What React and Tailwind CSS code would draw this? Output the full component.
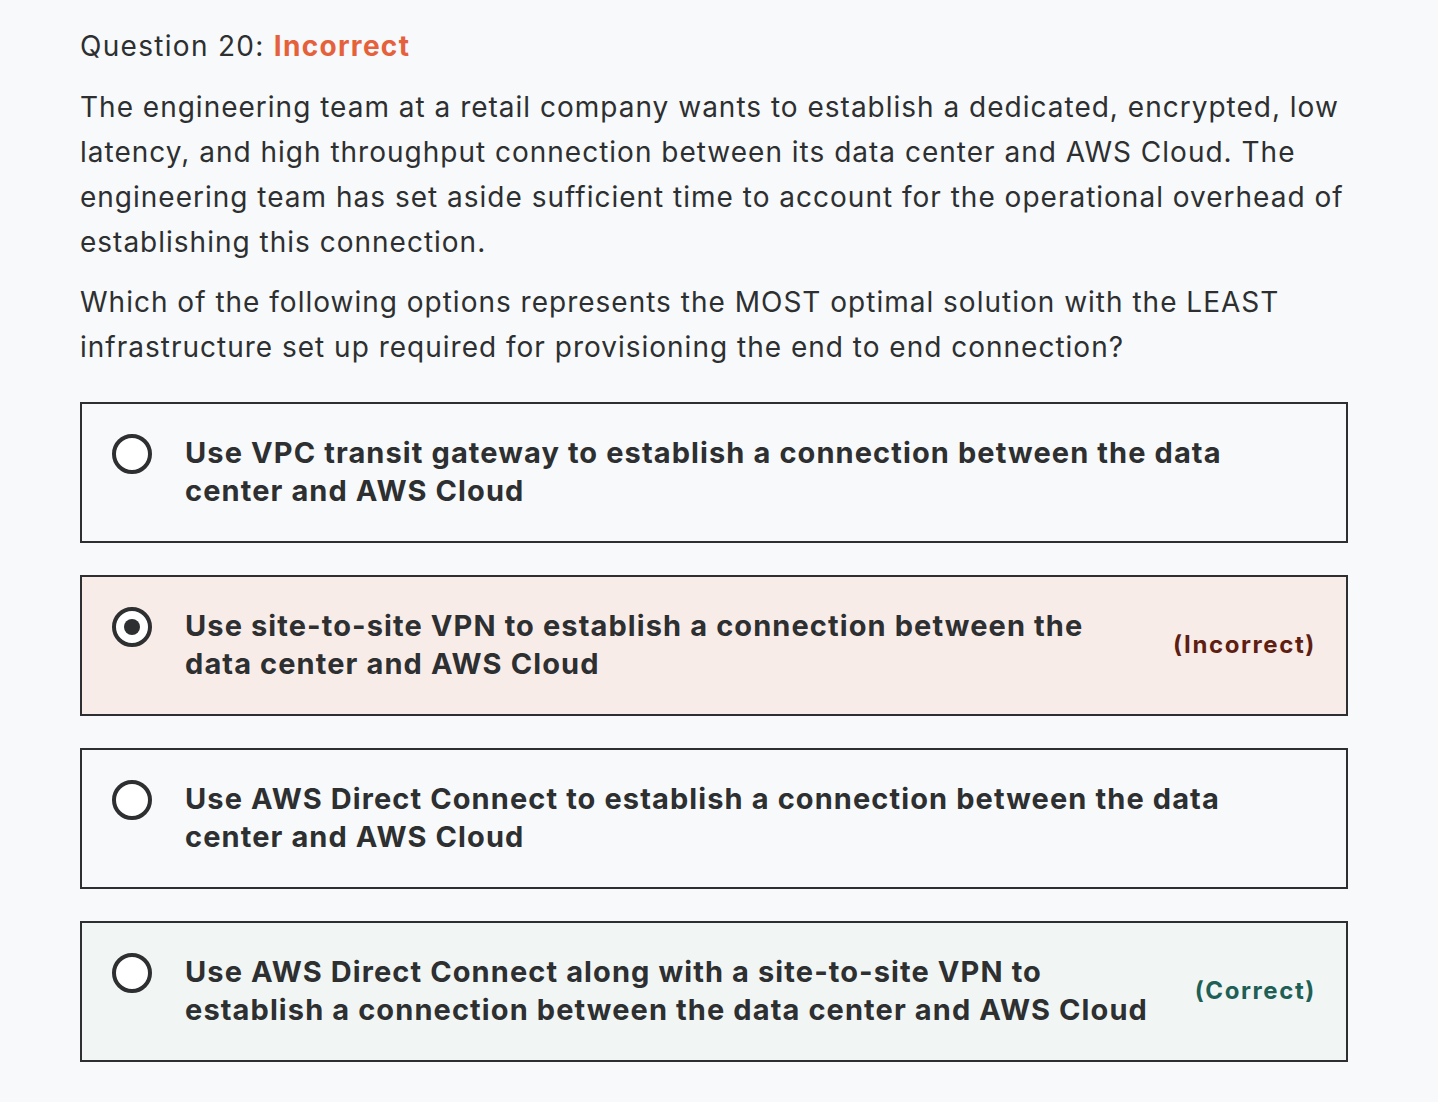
import React from 'react';

const options = [
    { text: 'Use VPC transit gateway to establish a connection between the data center and AWS Cloud' },
    { text: 'Use site-to-site VPN to establish a connection between the data center and AWS Cloud', selected: true, status: 'incorrect' },
    { text: 'Use AWS Direct Connect to establish a connection between the data center and AWS Cloud' },
    { text: 'Use AWS Direct Connect along with a site-to-site VPN to establish a connection between the data center and AWS Cloud', status: 'correct' },
];

const Radio = ({ selected }) => (
    <div className="w-[40px] h-[40px] shrink-0 rounded-full border-[4px] border-[#2d2f31] bg-white flex items-center justify-center">
        {selected && <div className="w-[16px] h-[16px] rounded-full bg-[#2d2f31]" />}
    </div>
);

const Option = ({ text, selected, status }) => {
    const bg = status === 'incorrect' ? 'bg-[#f8ece9]' : status === 'correct' ? 'bg-[#f1f6f4]' : 'bg-transparent';
    return (
        <div className={`border-2 border-[#2d2f31] ${bg} pl-[30px] pr-[30px] pt-[30px] pb-[31px] flex items-start gap-[33px]`}>
            <Radio selected={selected} />
            <div className="flex-1 flex items-center justify-between gap-3 min-h-[76px]">
                <div className={`text-[29px] leading-[38px] font-bold tracking-[1.1px] text-[#2d2f31] self-start ${status ? 'max-w-[966px]' : 'max-w-[1080px]'}`}>
                    {text}
                </div>
                {status === 'incorrect' && (
                    <span className="shrink-0 text-[24px] font-bold tracking-[1.6px] text-[#5e1e12] whitespace-nowrap">(Incorrect)</span>
                )}
                {status === 'correct' && (
                    <span className="shrink-0 text-[24px] font-bold tracking-[1.6px] text-[#1e6055] whitespace-nowrap">(Correct)</span>
                )}
            </div>
        </div>
    );
};

const App = () => {
    return (
        <div className="min-h-[1102px] w-full bg-[#f7f9fa] text-[#2d2f31] px-[80px] pt-[26px]" style={{ fontFamily: 'Inter, "Liberation Sans", sans-serif' }}>
            <div className="w-[1268px]">
                <div className="text-[28px] leading-[40px] tracking-[1.3px] mb-[19px]">
                    Question 20: <span className="font-bold text-[#e5613c]">Incorrect</span>
                </div>
                <div className="text-[28px] leading-[45px] tracking-[1px] mb-[15px]">
                    The engineering team at a retail company wants to establish a dedicated, encrypted, low latency, and high throughput connection between its data center and AWS Cloud. The engineering team has set aside sufficient time to account for the operational overhead of establishing this connection.
                </div>
                <div className="text-[28px] leading-[45px] tracking-[1px] mb-[32px]">
                    Which of the following options represents the MOST optimal solution with the LEAST infrastructure set up required for provisioning the end to end connection?
                </div>
                <div className="flex flex-col gap-[32px]">
                    {options.map((o, i) => (
                        <Option key={i} {...o} />
                    ))}
                </div>
            </div>
        </div>
    );
};

export default App;
